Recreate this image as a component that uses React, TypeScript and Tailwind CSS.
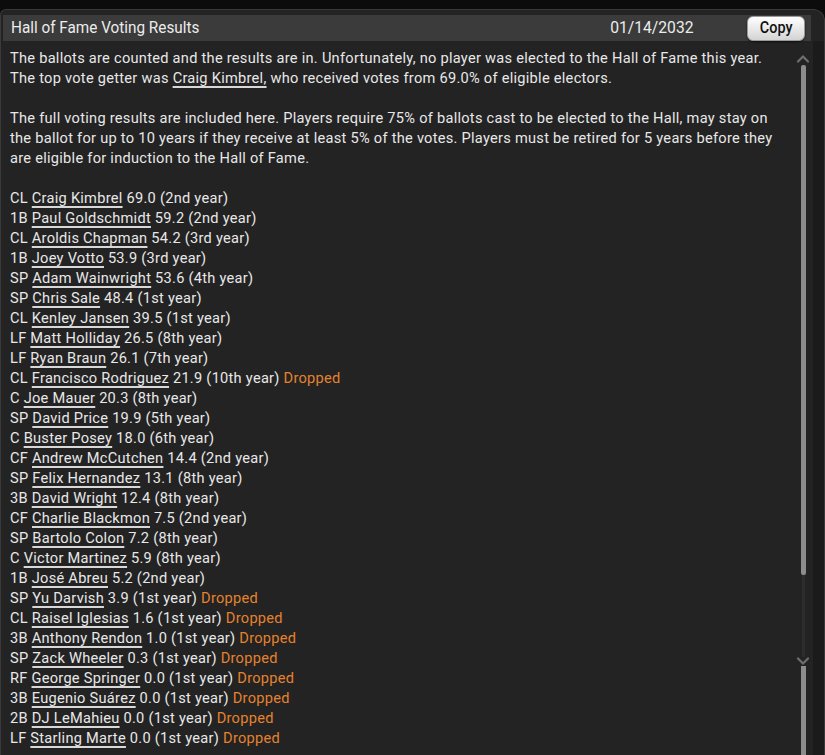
import React from "react";

type Row = { pos: string; name: string; pct: string; yr: string; dropped?: boolean };

const rows: Row[] = [
  { pos: "CL", name: "Craig Kimbrel", pct: "69.0", yr: "2nd" },
  { pos: "1B", name: "Paul Goldschmidt", pct: "59.2", yr: "2nd" },
  { pos: "CL", name: "Aroldis Chapman", pct: "54.2", yr: "3rd" },
  { pos: "1B", name: "Joey Votto", pct: "53.9", yr: "3rd" },
  { pos: "SP", name: "Adam Wainwright", pct: "53.6", yr: "4th" },
  { pos: "SP", name: "Chris Sale", pct: "48.4", yr: "1st" },
  { pos: "CL", name: "Kenley Jansen", pct: "39.5", yr: "1st" },
  { pos: "LF", name: "Matt Holliday", pct: "26.5", yr: "8th" },
  { pos: "LF", name: "Ryan Braun", pct: "26.1", yr: "7th" },
  { pos: "CL", name: "Francisco Rodriguez", pct: "21.9", yr: "10th", dropped: true },
  { pos: "C", name: "Joe Mauer", pct: "20.3", yr: "8th" },
  { pos: "SP", name: "David Price", pct: "19.9", yr: "5th" },
  { pos: "C", name: "Buster Posey", pct: "18.0", yr: "6th" },
  { pos: "CF", name: "Andrew McCutchen", pct: "14.4", yr: "2nd" },
  { pos: "SP", name: "Felix Hernandez", pct: "13.1", yr: "8th" },
  { pos: "3B", name: "David Wright", pct: "12.4", yr: "8th" },
  { pos: "CF", name: "Charlie Blackmon", pct: "7.5", yr: "2nd" },
  { pos: "SP", name: "Bartolo Colon", pct: "7.2", yr: "8th" },
  { pos: "C", name: "Victor Martinez", pct: "5.9", yr: "8th" },
  { pos: "1B", name: "José Abreu", pct: "5.2", yr: "2nd" },
  { pos: "SP", name: "Yu Darvish", pct: "3.9", yr: "1st", dropped: true },
  { pos: "CL", name: "Raisel Iglesias", pct: "1.6", yr: "1st", dropped: true },
  { pos: "3B", name: "Anthony Rendon", pct: "1.0", yr: "1st", dropped: true },
  { pos: "SP", name: "Zack Wheeler", pct: "0.3", yr: "1st", dropped: true },
  { pos: "RF", name: "George Springer", pct: "0.0", yr: "1st", dropped: true },
  { pos: "3B", name: "Eugenio Suárez", pct: "0.0", yr: "1st", dropped: true },
  { pos: "2B", name: "DJ LeMahieu", pct: "0.0", yr: "1st", dropped: true },
  { pos: "LF", name: "Starling Marte", pct: "0.0", yr: "1st", dropped: true },
];

function Link({ children }: { children: React.ReactNode }) {
  return <span className="underline decoration-[1.5px] underline-offset-[3px] decoration-[#d8d8d8]">{children}</span>;
}

function Chevron() {
  return (
    <svg width="14" height="9" viewBox="0 0 14 9" className="block">
      <path d="M2 7.5 L7 2.5 L12 7.5" fill="none" stroke="#6e6e6e" strokeWidth="2.2" strokeLinecap="round" />
    </svg>
  );
}

export default function App() {
  return (
    <div className="w-[825px] h-[755px] overflow-hidden bg-[#0c0c0c] pt-[9px] font-['Roboto',sans-serif]">
      <div className="h-full rounded-tr-[12px] rounded-tl-[6px] bg-[#232323] border-t border-l border-r border-[#3a3a3a] flex flex-col">
        {/* header */}
        <div className="mt-[5px] ml-[2px] mr-[13px] h-[26px] bg-[#3b3b3b] flex items-center pl-[8px] pr-[6px]">
          <span className="text-[17px] text-[#ececec] origin-left scale-x-[0.9] whitespace-nowrap">Hall of Fame Voting Results</span>
          <span className="ml-auto mr-[54px] text-[17px] text-[#ececec] scale-x-[0.92] origin-right">01/14/2032</span>
          <button className="h-[25px] w-[58px] rounded-[6px] bg-gradient-to-b from-white to-[#d4d4d4] border border-[#9a9a9a] text-[16px] font-medium text-[#111] shadow-[0_1px_2px_rgba(0,0,0,0.6)] flex items-center justify-center">
            <span className="scale-x-[0.9]">Copy</span>
          </button>
        </div>
        {/* body */}
        <div className="flex flex-1 min-h-0">
          <div className="flex-1 pl-[9px] pt-[7px] text-[14.6px] leading-[20px] tracking-[0.27px] text-[#e8e8e8]">
            <p>
              The ballots are counted and the results are in. Unfortunately, no player was elected to the Hall of Fame this year.
              <br />
              The top vote getter was <Link>Craig Kimbrel,</Link> who received votes from 69.0% of eligible electors.
            </p>
            <p className="mt-[20px] pr-[12px]">
              The full voting results are included here. Players require 75% of ballots cast to be elected to the Hall, may stay on the ballot for up to 10 years if they receive at least 5% of the votes. Players must be retired for 5 years before they are eligible for induction to the Hall of Fame.
            </p>
            <div className="mt-[20px]">
              {rows.map((r) => (
                <div key={r.name} className="whitespace-nowrap">
                  {r.pos} <Link>{r.name}</Link> {r.pct} ({r.yr} year)
                  {r.dropped && <span className="text-[#e5822e]"> Dropped</span>}
                </div>
              ))}
            </div>
          </div>
          {/* scrollbar */}
          <div className="w-[24px] flex flex-col items-center pt-[13px] mr-[-2px]">
            <Chevron />
            <div className="mt-[2px] w-[5px] h-[510px] rounded-[2px] bg-[#8c8c8c]" />
            <div className="w-[3px] h-[82px] bg-[#2c2c2c]" />
            <div className="rotate-180"><Chevron /></div>
            <div className="w-[5px] flex-1 bg-[#8c8c8c]" />
          </div>
          <div className="w-[11px] bg-[#1b1b1b]" />
        </div>
      </div>
    </div>
  );
}
